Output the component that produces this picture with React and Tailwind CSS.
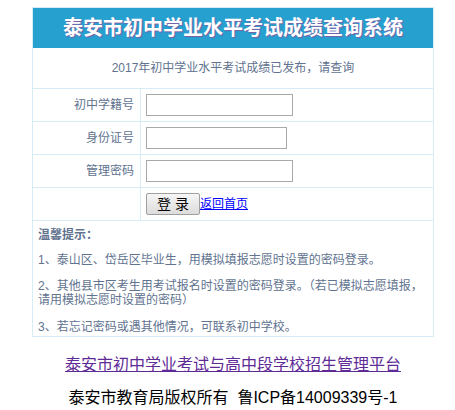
import React from 'react';

const fields = [
  { label: '初中学籍号', width: 'w-[147px]', type: 'text' },
  { label: '身份证号', width: 'w-[141px]', type: 'text' },
  { label: '管理密码', width: 'w-[147px]', type: 'password' },
];

const App = () => {
  return (
    <div className="min-h-[410px] bg-white pt-[7px] font-['Liberation_Sans','Noto_Sans_CJK_SC',sans-serif]">
      <div className="ml-[32px] w-[402px]">
        <div className="border border-[#d6ecf7]">
          <div className="flex h-[40px] items-center justify-center bg-[#25a0cf] text-[20px] font-bold text-white [text-shadow:1px_1px_1px_#7e5fa6]">
            泰安市初中学业水平考试成绩查询系统
          </div>
          <div className="flex h-[40px] items-center justify-center text-[12px] text-[#61738f]">
            2017年初中学业水平考试成绩已发布，请查询
          </div>

          {fields.map((f) => (
            <div key={f.label} className="flex h-[33px] border-t border-[#d6ecf7]">
              <div className="flex w-[108px] items-center justify-end border-r border-[#d6ecf7] pr-[6px] text-[12px] text-[#61738f]">
                {f.label}
              </div>
              <div className="flex items-center pl-[5px]">
                <input
                  type={f.type}
                  className={`${f.width} h-[22px] border border-[#a9a9a9] bg-white outline-none`}
                />
              </div>
            </div>
          ))}

          <div className="flex h-[33px] border-t border-[#d6ecf7]">
            <div className="w-[108px] border-r border-[#d6ecf7]"></div>
            <div className="flex items-center pl-[5px]">
              <button className="h-[22px] w-[54px] rounded-[2px] border border-[#a0a0a0] bg-gradient-to-b from-[#f6f6f6] to-[#dcdcdc] text-[14px] leading-none text-black">
                登 录
              </button>
              <a href="#" className="text-[12px] text-[#0000ff] underline">
                返回首页
              </a>
            </div>
          </div>

          <div className="border-t border-[#d6ecf7] px-[5px] pb-[2px] text-[12px] leading-[14px] text-[#61738f]">
            <p className="mt-[7px] font-bold">温馨提示：</p>
            <p className="mt-[11px]">1、泰山区、岱岳区毕业生，用模拟填报志愿时设置的密码登录。</p>
            <p className="mt-[12px] leading-[14px]">
              2、其他县市区考生用考试报名时设置的密码登录。（若已模拟志愿填报，
              <br />
              请用模拟志愿时设置的密码）
            </p>
            <p className="mt-[13px]">3、若忘记密码或遇其他情况，可联系初中学校。</p>
          </div>
        </div>

        <div className="mt-[18px] text-center text-[16px] leading-[20px]">
          <a href="#" className="text-[#5e2a96] underline">
            泰安市初中学业考试与高中段学校招生管理平台
          </a>
        </div>
        <div className="mt-[13px] text-center text-[16px] leading-[20px] text-black">
          泰安市教育局版权所有&nbsp;&nbsp;鲁ICP备14009339号-1
        </div>
      </div>
    </div>
  );
};

export default App;
